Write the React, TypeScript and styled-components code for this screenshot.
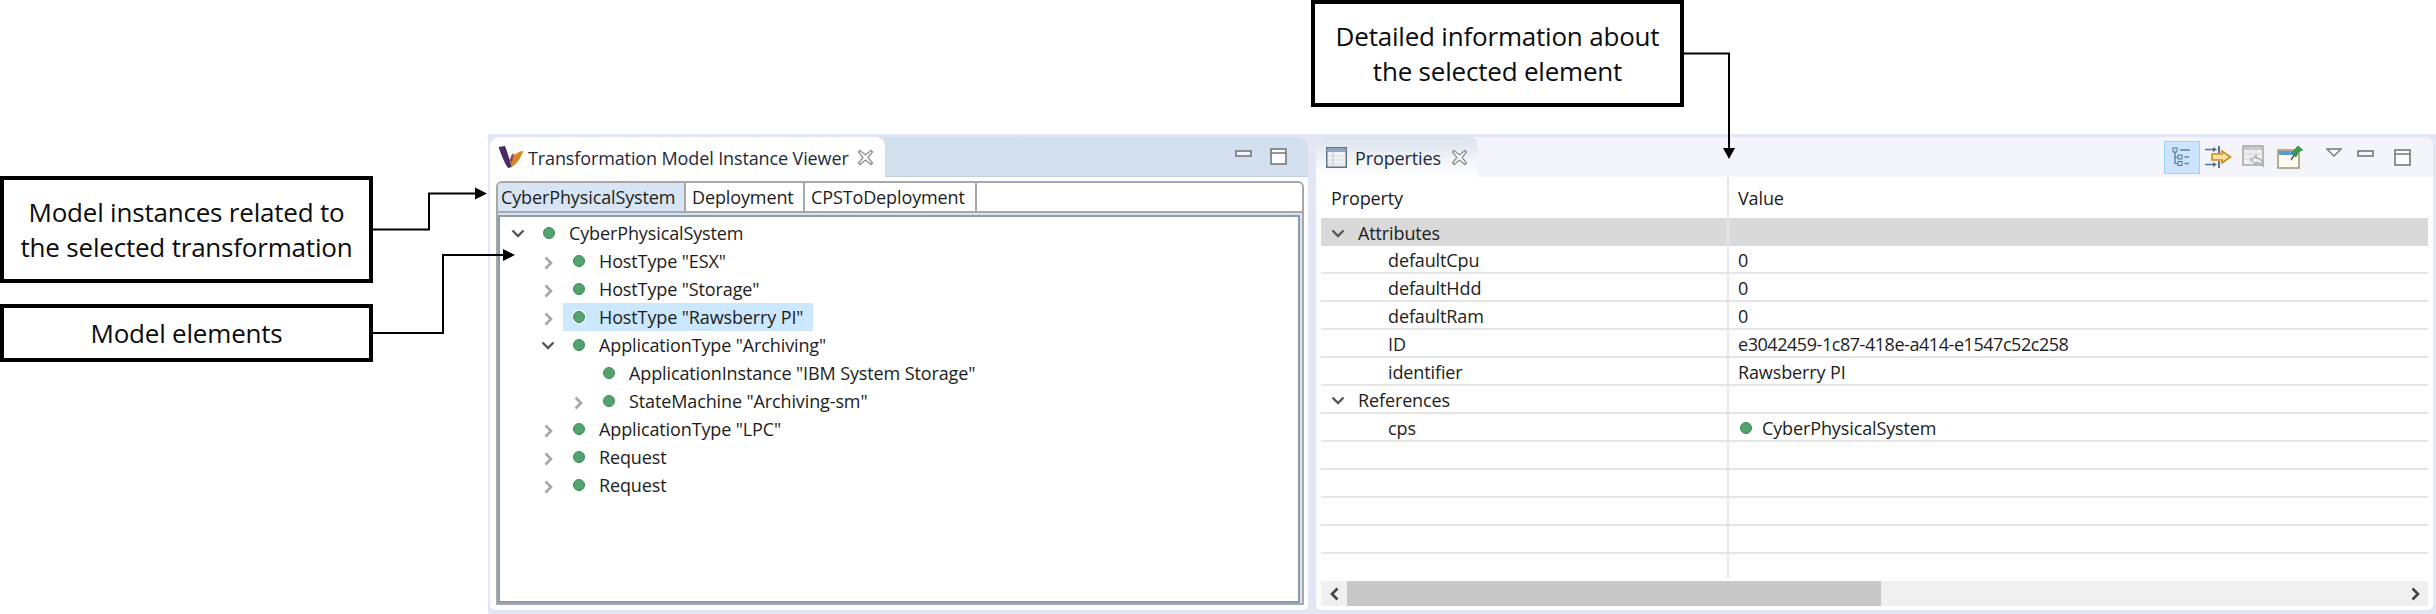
import styled, { createGlobalStyle } from "styled-components";

const GlobalStyle = createGlobalStyle`
  html, body {
    margin: 0;
    padding: 0;
    background: #fff;
  }
  * {
    box-sizing: border-box;
  }
`;

const uiFont = `"Open Sans", "Noto Sans", sans-serif`;

const Page = styled.div`
  position: relative;
  display: flex;
  width: 2436px;
  height: 614px;
  overflow: hidden;
  background: #fff;
  font-family: ${uiFont};
  color: #1c1c1c;
`;

const CalloutColumn = styled.div`
  display: flex;
  flex-direction: column;
  gap: 21px;
  width: 488px;
  padding-top: 176px;
`;

const Callout = styled.div<{ $h: number; $w: number }>`
  display: flex;
  align-items: center;
  justify-content: center;
  width: ${(p) => p.$w}px;
  height: ${(p) => p.$h}px;
  border: 4px solid #000;
  background: #fff;
  color: #0c0c0c;
  font-size: 26px;
  line-height: 35px;
  text-align: center;
  letter-spacing: -0.2px;
`;

const TopCallout = styled(Callout)`
  margin-left: 823px;
`;

const MainColumn = styled.div`
  display: flex;
  flex: 1;
  flex-direction: column;
  min-width: 0;
`;

const TopRow = styled.div`
  height: 134px;
`;

const Workbench = styled.div`
  display: flex;
  flex: 1;
  gap: 8px;
  padding: 3px 3px 4px 2px;
  background: #e2e6f5;
`;

const View = styled.section<{ $w?: number }>`
  display: flex;
  flex-direction: column;
  ${(p) => (p.$w ? `width: ${p.$w}px;` : "flex: 1;")}
  min-width: 0;
  border-radius: 9px 9px 5px 5px;
  background: #fff;
  overflow: hidden;
`;

const TitleBar = styled.div<{ $active?: boolean }>`
  display: flex;
  align-items: stretch;
  height: 40px;
  flex-shrink: 0;
  background: ${(p) =>
    p.$active ? "linear-gradient(#d3e0f0, #d1dfef)" : "#f3f5fb"};
  border-bottom: ${(p) => (p.$active ? "1px solid #c4cde0" : "none")};
`;

const ViewTab = styled.div<{ $w: number; $active?: boolean }>`
  display: flex;
  align-items: center;
  width: ${(p) => p.$w}px;
  padding-left: ${(p) => (p.$active ? 8 : 10)}px;
  border-radius: 9px 9px 0 0;
  background: ${(p) =>
    p.$active ? "#fff" : "linear-gradient(#dbe3ed, #f2f5fa 60%, #ffffff)"};
  margin-bottom: ${(p) => (p.$active ? -1 : 0)}px;
`;

const ViewTitle = styled.span<{ $ml: number; $mr: number }>`
  margin-left: ${(p) => p.$ml}px;
  margin-right: ${(p) => p.$mr}px;
  padding-top: 2px;
  font-size: 18px;
  letter-spacing: -0.12px;
  white-space: nowrap;
  color: #1f2a36;
`;

const Actions = styled.div<{ $pr: number }>`
  display: flex;
  align-items: center;
  margin-left: auto;
  padding-right: ${(p) => p.$pr}px;
`;

const Slot = styled.div<{ $w: number; $ml?: number; $on?: boolean }>`
  display: flex;
  align-items: center;
  justify-content: center;
  width: ${(p) => p.$w}px;
  height: 33px;
  margin-left: ${(p) => p.$ml ?? 0}px;
  border: 1px solid ${(p) => (p.$on ? "#99d1ff" : "transparent")};
  background: ${(p) => (p.$on ? "#cce4ff" : "transparent")};
`;

const Folder = styled.div`
  display: flex;
  flex: 1;
  flex-direction: column;
  margin: 4px 4px 5px 6px;
  border: 2px solid #a8a8a8;
  border-radius: 6px 6px 0 0;
  background: #d6e4f3;
  overflow: hidden;
`;

const FolderTabs = styled.div`
  display: flex;
  height: 30px;
  flex-shrink: 0;
  background: #fff;
  border-bottom: 2px solid #a8a8a8;
`;

const FolderTab = styled.div<{ $w: number; $active?: boolean }>`
  display: flex;
  align-items: center;
  width: ${(p) => p.$w}px;
  padding-left: ${(p) => (p.$active ? 3 : 6)}px;
  border-right: 2px solid #a8a8a8;
  background: ${(p) => (p.$active ? "#d6e4f3" : "#fff")};
  font-size: 18px;
  letter-spacing: -0.12px;
`;

const TreeBox = styled.div`
  flex: 1;
  margin: 2px 2px 0 0;
  border: 2px solid #8c9bab;
  background: #fff;
  padding-top: 2px;
`;

const TreeRow = styled.div<{ $level: number }>`
  display: flex;
  align-items: center;
  height: 28px;
  padding-left: ${(p) => 11 + p.$level * 30}px;
`;

const Twisty = styled.span`
  display: flex;
  align-items: center;
  justify-content: center;
  width: 14px;
  height: 14px;
  flex-shrink: 0;
`;

const TreeLabel = styled.div<{ $selected?: boolean }>`
  display: flex;
  align-items: center;
  height: 28px;
  margin-left: 8px;
  padding: 0 10px 0 10px;
  background: ${(p) => (p.$selected ? "#cce8ff" : "transparent")};
  font-size: 18px;
  letter-spacing: -0.12px;
  white-space: nowrap;
`;

const Dot = styled.span`
  display: inline-block;
  width: 12px;
  height: 12px;
  margin-right: 14px;
  flex-shrink: 0;
  border-radius: 50%;
  border: 1px solid #3c8a58;
  background: #54a26e;
  box-shadow: 0 0 0 1px #fff;
`;

const PropertyTable = styled.div`
  display: flex;
  flex: 1;
  flex-direction: column;
  margin: 0 5px 4px 5px;
`;

const TableRow = styled.div<{ $h?: number; $section?: boolean; $plain?: boolean }>`
  display: flex;
  height: ${(p) => p.$h ?? 28}px;
  flex-shrink: 0;
  background: ${(p) => (p.$section ? "#d9d9d9" : "transparent")};
  border-bottom: ${(p) => (p.$plain ? "none" : "2px solid #e6e6e6")};
  font-size: 18px;
  letter-spacing: -0.12px;
  white-space: nowrap;
`;

const NameCell = styled.div<{ $pl: number; $tight?: boolean }>`
  display: flex;
  align-items: center;
  width: 408px;
  flex-shrink: 0;
  padding-left: ${(p) => p.$pl}px;
  padding-top: ${(p) => (p.$tight ? 0 : 2)}px;
  border-right: 2px solid #e6e6e6;
`;

const ValueCell = styled.div<{ $tight?: boolean }>`
  display: flex;
  align-items: center;
  padding-left: 9px;
  padding-top: ${(p) => (p.$tight ? 0 : 2)}px;
`;

const IdText = styled.span`
  letter-spacing: -0.45px;
`;

const SectionTwisty = styled(Twisty)`
  margin-right: 13px;
`;

const ValueDot = styled(Dot)`
  margin-left: 2px;
  margin-right: 10px;
`;

const ScrollBar = styled.div`
  display: flex;
  align-items: center;
  height: 25px;
  margin-top: 3px;
  flex-shrink: 0;
  background: #f0f0f0;
`;

const ScrollButton = styled.div`
  display: flex;
  align-items: center;
  justify-content: center;
  width: 26px;
  height: 25px;
  flex-shrink: 0;
`;

const ScrollThumb = styled.div`
  width: 534px;
  height: 25px;
  background: #c8c8c8;
`;

const ScrollGap = styled.div`
  flex: 1;
`;

const ArrowLayer = styled.svg`
  position: absolute;
  left: 0;
  top: 0;
  pointer-events: none;
`;

const Chevron = ({ open, dark }: { open?: boolean; dark?: boolean }) =>
  open ? (
    <svg width="14" height="9" viewBox="0 0 14 9">
      <polyline points="1.5,1.5 7,7 12.5,1.5" fill="none" stroke="#555" strokeWidth="2.4" />
    </svg>
  ) : (
    <svg width="9" height="14" viewBox="0 0 9 14" style={{ marginTop: dark ? 0 : 4 }}>
      <polyline
        points="1.5,1.5 7,7 1.5,12.5"
        fill="none"
        stroke={dark ? "#444" : "#a6a6a6"}
        strokeWidth="2.6"
      />
    </svg>
  );

const CloseIcon = () => (
  <svg width="17" height="17" viewBox="0 0 17 17">
    <path
      d="M3 1.5 L8.5 6 L14 1.5 L15.5 3 L11 8.5 L15.5 14 L14 15.5 L8.5 11 L3 15.5 L1.5 14 L6 8.5 L1.5 3 Z"
      fill="#fff"
      stroke="#8f8f8f"
      strokeWidth="1.3"
    />
  </svg>
);

const MinimizeIcon = () => (
  <svg width="17" height="7" viewBox="0 0 17 7" style={{ marginBottom: 7 }}>
    <rect x="1" y="1" width="15" height="5" fill="#f4f6fa" stroke="#777" strokeWidth="1.6" />
  </svg>
);

const MaximizeIcon = () => (
  <svg width="17" height="17" viewBox="0 0 17 17">
    <rect x="1" y="1" width="15" height="15" fill="#fbfcfe" stroke="#777" strokeWidth="1.6" />
    <line x1="1" y1="5" x2="16" y2="5" stroke="#777" strokeWidth="1.6" />
  </svg>
);

const LogoIcon = () => (
  <svg width="26" height="24" viewBox="0 0 26 24">
    <path d="M0.5 2 L7 1 C9 6 11 13 14 22 L10 23 C6 17 3 9 0.5 2 Z" fill="#4a2a63" />
    <path d="M12 15 C13.5 9 15 7 17 10 C19 8 22 6 25.5 6 C23 11 20 19 13.5 22 Z" fill="#d98a1f" />
    <path d="M12 15 C13 11 14 9 15.5 9 L14 18 Z" fill="#7a3f7d" />
  </svg>
);

const TableIcon = () => (
  <svg width="21" height="21" viewBox="0 0 21 21">
    <rect x="0.8" y="0.8" width="19.4" height="19.4" fill="#f3f4f6" stroke="#64748c" strokeWidth="1.6" />
    <rect x="1.6" y="1.6" width="17.8" height="3.4" fill="#8ea6c4" />
    <path d="M1 9 H20 M1 13 H20 M1 17 H20" stroke="#d5d9de" strokeWidth="1.2" />
    <path d="M7 5 V20" stroke="#c5cad2" strokeWidth="1.2" />
  </svg>
);

const TreeModeIcon = () => (
  <svg width="20" height="20" viewBox="0 0 20 20">
    <rect x="1" y="1" width="4" height="4" fill="#cfe2f4" stroke="#4f7396" strokeWidth="1" />
    <rect x="6" y="8" width="4" height="4" fill="#cfe2f4" stroke="#4f7396" strokeWidth="1" />
    <rect x="6" y="14.5" width="4" height="4" fill="#cfe2f4" stroke="#4f7396" strokeWidth="1" />
    <path d="M3 5 V16.5 H6 M3 10 H6" fill="none" stroke="#4f7396" strokeWidth="1.2" />
    <path d="M8 3 H18 M12.5 10 H17 M12.5 16.5 H17" stroke="#6b8099" strokeWidth="1.6" />
  </svg>
);

const FilterIcon = () => (
  <svg width="27" height="22" viewBox="0 0 27 22">
    <path d="M0 3.5 H10 M0 18.5 H10" stroke="#4f7396" strokeWidth="1.6" />
    <path d="M8 1 L12 3.5 L8 6 Z M8 16 L12 18.5 L8 21 Z" fill="#4f7396" />
    <path d="M14 0 V7 M14 15 V22" stroke="#3a5068" strokeWidth="1.6" />
    <path
      d="M7 8 H17 V5 L25.5 11 L17 17 V14 H7 Z"
      fill="#f8e0a0"
      stroke="#c98a1c"
      strokeWidth="1.6"
    />
  </svg>
);

const RestoreIcon = () => (
  <svg width="24" height="24" viewBox="0 0 24 24">
    <rect x="1" y="1" width="20" height="19" fill="#f1f1f1" stroke="#a9a9a9" strokeWidth="1.6" />
    <rect x="2" y="2" width="18" height="3" fill="#c9c9c9" />
    <path d="M2 9 H20 M2 14 H20 M8 5 V20 M14 5 V20" stroke="#d6d6d6" strokeWidth="1" />
    <path
      d="M9 15 L14 10.5 V13 C18 13 21 16 21 21 C19 18 17 17.5 14 17.5 V20 Z"
      fill="#eee"
      stroke="#ababab"
      strokeWidth="1.3"
    />
  </svg>
);

const PinnedIcon = () => (
  <svg width="26" height="24" viewBox="0 0 26 24">
    <rect x="1" y="5" width="21" height="18" fill="#fbfbf4" stroke="#a39a78" strokeWidth="1.6" />
    <rect x="2" y="6" width="19" height="4" fill="#5b9bd5" />
    <path d="M14 15 L18 9" stroke="#555" strokeWidth="1.4" />
    <path d="M15 8 L21 1 L25.5 5 L20 7.5 L19 12 Z" fill="#3f9a4c" stroke="#2a7a38" strokeWidth="0.8" />
  </svg>
);

const MenuIcon = () => (
  <svg width="16" height="9" viewBox="0 0 16 9" style={{ marginBottom: 10 }}>
    <path d="M1 1 H15 L8 8 Z" fill="#f8f9fc" stroke="#777" strokeWidth="1.4" />
  </svg>
);

const treeRows = [
  { level: 0, text: "CyberPhysicalSystem", open: true },
  { level: 1, text: 'HostType "ESX"' },
  { level: 1, text: 'HostType "Storage"' },
  { level: 1, text: 'HostType "Rawsberry PI"', selected: true },
  { level: 1, text: 'ApplicationType "Archiving"', open: true },
  { level: 2, text: 'ApplicationInstance "IBM System Storage"', leaf: true },
  { level: 2, text: 'StateMachine "Archiving-sm"' },
  { level: 1, text: 'ApplicationType "LPC"' },
  { level: 1, text: "Request" },
  { level: 1, text: "Request" },
];

const attributes = [
  ["defaultCpu", "0"],
  ["defaultHdd", "0"],
  ["defaultRam", "0"],
  ["ID", <IdText>e3042459-1c87-418e-a414-e1547c52c258</IdText>],
  ["identifier", "Rawsberry PI"],
] as const;

function App() {
  return (
    <Page>
      <GlobalStyle />
      <CalloutColumn>
        <Callout $w={373} $h={107}>
          Model instances related to
          <br />
          the selected transformation
        </Callout>
        <Callout $w={373} $h={58}>
          Model elements
        </Callout>
      </CalloutColumn>

      <MainColumn>
        <TopRow>
          <TopCallout $w={373} $h={107}>
            Detailed information about
            <br />
            the selected element
          </TopCallout>
        </TopRow>

        <Workbench>
          <View $w={818}>
            <TitleBar $active>
              <ViewTab $w={395} $active>
                <LogoIcon />
                <ViewTitle $ml={4} $mr={8}>
                  Transformation Model Instance Viewer
                </ViewTitle>
                <CloseIcon />
              </ViewTab>
              <Actions $pr={17}>
                <Slot $w={26}>
                  <MinimizeIcon />
                </Slot>
                <Slot $w={26} $ml={9}>
                  <MaximizeIcon />
                </Slot>
              </Actions>
            </TitleBar>
            <Folder>
              <FolderTabs>
                <FolderTab $w={188} $active>
                  CyberPhysicalSystem
                </FolderTab>
                <FolderTab $w={119}>Deployment</FolderTab>
                <FolderTab $w={172}>CPSToDeployment</FolderTab>
              </FolderTabs>
              <TreeBox>
                {treeRows.map((row, i) => (
                  <TreeRow key={i} $level={row.level}>
                    <Twisty>{!row.leaf && <Chevron open={row.open} />}</Twisty>
                    <TreeLabel $selected={row.selected}>
                      <Dot />
                      {row.text}
                    </TreeLabel>
                  </TreeRow>
                ))}
              </TreeBox>
            </Folder>
          </View>

          <View>
            <TitleBar>
              <ViewTab $w={162}>
                <TableIcon />
                <ViewTitle $ml={8} $mr={10}>
                  Properties
                </ViewTitle>
                <CloseIcon />
              </ViewTab>
              <Actions $pr={18}>
                <Slot $w={36} $on>
                  <TreeModeIcon />
                </Slot>
                <Slot $w={36}>
                  <FilterIcon />
                </Slot>
                <Slot $w={36}>
                  <RestoreIcon />
                </Slot>
                <Slot $w={36}>
                  <PinnedIcon />
                </Slot>
                <Slot $w={36} $ml={8}>
                  <MenuIcon />
                </Slot>
                <Slot $w={26}>
                  <MinimizeIcon />
                </Slot>
                <Slot $w={26} $ml={11}>
                  <MaximizeIcon />
                </Slot>
              </Actions>
            </TitleBar>
            <PropertyTable>
              <TableRow $h={41} $plain>
                <NameCell $pl={10} $tight>
                  Property
                </NameCell>
                <ValueCell $tight>Value</ValueCell>
              </TableRow>
              <TableRow $section $plain>
                <NameCell $pl={10}>
                  <SectionTwisty>
                    <Chevron open />
                  </SectionTwisty>
                  Attributes
                </NameCell>
                <ValueCell />
              </TableRow>
              {attributes.map(([name, value]) => (
                <TableRow key={name}>
                  <NameCell $pl={67}>{name}</NameCell>
                  <ValueCell>{value}</ValueCell>
                </TableRow>
              ))}
              <TableRow>
                <NameCell $pl={10}>
                  <SectionTwisty>
                    <Chevron open />
                  </SectionTwisty>
                  References
                </NameCell>
                <ValueCell />
              </TableRow>
              <TableRow>
                <NameCell $pl={67}>cps</NameCell>
                <ValueCell>
                  <ValueDot />
                  CyberPhysicalSystem
                </ValueCell>
              </TableRow>
              {[0, 1, 2, 3].map((n) => (
                <TableRow key={n}>
                  <NameCell $pl={67} />
                  <ValueCell />
                </TableRow>
              ))}
              <TableRow $h={24} $plain>
                <NameCell $pl={67} />
                <ValueCell />
              </TableRow>
              <ScrollBar>
                <ScrollButton>
                  <svg width="9" height="14" viewBox="0 0 9 14">
                    <polyline points="7.5,1.5 2,7 7.5,12.5" fill="none" stroke="#444" strokeWidth="2.6" />
                  </svg>
                </ScrollButton>
                <ScrollThumb />
                <ScrollGap />
                <ScrollButton>
                  <Chevron dark />
                </ScrollButton>
              </ScrollBar>
            </PropertyTable>
          </View>
        </Workbench>
      </MainColumn>

      <ArrowLayer width="2436" height="614" viewBox="0 0 2436 614">
        <path d="M372 229.5 H429 V193.5 H476" fill="none" stroke="#000" strokeWidth="2" />
        <path d="M475 187.5 L487 193.5 L475 199.5 Z" fill="#000" />
        <path d="M372 333 H443 V255 H505" fill="none" stroke="#000" strokeWidth="2" />
        <path d="M503 249 L515 255 L503 261 Z" fill="#000" />
        <path d="M1684 53.5 H1729 V150" fill="none" stroke="#000" strokeWidth="2" />
        <path d="M1723 148 L1729 159 L1735 148 Z" fill="#000" />
      </ArrowLayer>
    </Page>
  );
}

export default App;
